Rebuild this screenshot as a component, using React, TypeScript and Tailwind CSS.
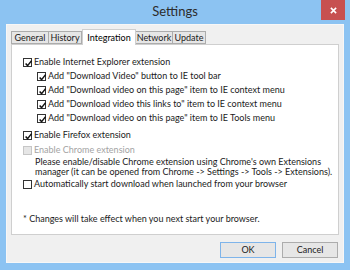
import { useState } from "react";

const font = { fontFamily: '"Segoe UI", Lato, "Liberation Sans", sans-serif' };

function CheckBox({ checked, disabled }: { checked?: boolean; disabled?: boolean }) {
  return (
    <span
      className={
        "grid h-[9px] w-[9px] shrink-0 place-items-center border " +
        (disabled ? "border-[#c6c6c6] bg-[#e6e6e6]" : "border-[#333333] bg-white")
      }
    >
      {checked ? (
        <svg viewBox="0 0 9 9" className="h-[9px] w-[9px]" aria-hidden>
          <path d="M1.6 4.4 L3.6 6.6 L7.6 1.6" fill="none" stroke="#111" strokeWidth="1.5" />
        </svg>
      ) : null}
    </span>
  );
}

function Row({ label, checked, disabled, sub }: { label: string; checked?: boolean; disabled?: boolean; sub?: boolean }) {
  return (
    <div className={"flex h-[14px] items-center gap-[2px] " + (sub ? "pl-[14px]" : "")}>
      <CheckBox checked={checked} disabled={disabled} />
      <span className={disabled ? "text-[#a3a3a3]" : "text-[#1b1b1b]"}>{label}</span>
    </div>
  );
}

const tabs = [
  ["General", "w-[38px]"],
  ["History", "w-[34px]"],
  ["Integration", "w-[54px]"],
  ["Network", "w-[38px]"],
  ["Update", "w-[34px]"],
] as const;

export default function App() {
  const [active] = useState("Integration");

  return (
    <div className="flex h-[270px] w-[350px] flex-col bg-[#8cc3f2]" style={font}>
      <div className="relative flex h-[24px] shrink-0 items-center justify-center">
        <span className="text-[13px] text-[#2c2c2c]">Settings</span>
        <div className="absolute right-[5px] top-0 grid h-[20px] w-[24px] place-items-center bg-[#c75050]">
          <svg viewBox="0 0 8 8" className="h-[7px] w-[7px]" aria-hidden>
            <path d="M1 1 L7 7 M7 1 L1 7" stroke="#fff" strokeWidth="1.8" />
          </svg>
        </div>
      </div>

      <div className="mx-[6px] flex h-[239px] flex-col border border-[#f7f7f7] bg-[#f0f0f0] px-[4px] pt-[4px] text-[9px]">
        <div className="flex h-[15px] items-end">
          {tabs.map(([name, w]) =>
            name === active ? (
              <div
                key={name}
                className={`relative z-10 -mb-px flex h-[16px] items-center justify-center border border-b-0 border-[#cfcfcf] bg-white ${w}`}
              >
                {name}
              </div>
            ) : (
              <div
                key={name}
                className={`-ml-px flex h-[13px] items-center justify-center border border-[#acacac] bg-[#e6e6e6] text-[#1b1b1b] first:ml-0 ${w}`}
              >
                {name}
              </div>
            )
          )}
        </div>

        <div className="flex h-[191px] flex-col border border-[#cfcfcf] bg-white pl-[11px] pt-[10px]">
          <Row label="Enable Internet Explorer extension" checked />
          <Row sub label={'Add "Download Video" button to IE tool bar'} checked />
          <Row sub label={'Add "Download video on this page" item to IE context menu'} checked />
          <Row sub label={'Add "Download video this links to" item to IE context menu'} checked />
          <Row sub label={'Add "Download video on this page" item to IE Tools menu'} checked />
          <div className="mt-[3px]">
            <Row label="Enable Firefox extension" checked />
          </div>
          <div className="mt-px">
            <Row label="Enable Chrome extension" disabled />
          </div>
          <div className="pl-[12px] leading-[10px] text-[#1b1b1b]">
            <p>Please enable/disable Chrome extension using Chrome's own Extensions</p>
            <p>manager (it can be opened from Chrome -&gt; Settings -&gt; Tools -&gt; Extensions).</p>
          </div>
          <Row label="Automatically start download when launched from your browser" />
          <p className="mt-[21px] text-[#1b1b1b]">* Changes will take effect when you next start your browser.</p>
        </div>

        <div className="flex justify-end gap-[6px] pr-[1px] pt-[7px]">
          <button className="h-[16px] w-[56px] border border-[#7eb4ea] bg-[#e6e6e6] text-[9px] text-[#1b1b1b]">OK</button>
          <button className="h-[16px] w-[56px] border border-[#acacac] bg-[#e6e6e6] text-[9px] text-[#1b1b1b]">Cancel</button>
        </div>
      </div>
    </div>
  );
}
